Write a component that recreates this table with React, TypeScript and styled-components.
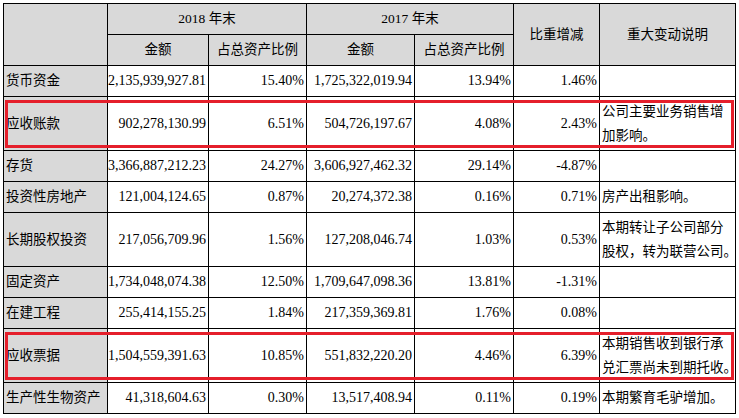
import styled, { createGlobalStyle } from "styled-components";

const GlobalStyle = createGlobalStyle`
  html, body {
    margin: 0;
    padding: 0;
    background: #ffffff;
  }
  body {
    font-family: "Liberation Serif", "Noto Sans CJK SC", serif;
    color: #000;
  }
`;

const Page = styled.div`
  padding: 3px 0 0 3px;
`;

const Table = styled.table`
  border-collapse: collapse;
  table-layout: fixed;
  width: 732px;
  font-size: 13.5px;
  line-height: 24px;
`;

const HeadCell = styled.th`
  background: #d9d9d9;
  border: 1.5px solid #000;
  font-weight: normal;
  text-align: center;
  vertical-align: middle;
  padding: 0;
  height: 30px;
`;

const Row = styled.tr<{ $tall?: boolean }>`
  position: relative;
  height: ${(p) => (p.$tall ? "54px" : "31px")};
`;

const NameCell = styled.td`
  background: #d9d9d9;
  border: 1.5px solid #000;
  padding: 0 0 0 2px;
  white-space: nowrap;
  vertical-align: middle;
`;

const NumCell = styled.td`
  border: 1.5px solid #000;
  text-align: right;
  padding: 0 2px 0 0;
  font-size: 14px;
  white-space: nowrap;
  vertical-align: middle;
`;

const NoteCell = styled.td`
  border: 1.5px solid #000;
  padding: 0 0 0 2px;
  white-space: nowrap;
  vertical-align: middle;
  overflow: visible;
`;

const Highlight = styled.div`
  position: absolute;
  top: 3px;
  bottom: 3px;
  left: 1px;
  right: 2px;
  border: 3px solid #e51f2b;
  pointer-events: none;
`;

type Item = {
  name: string;
  a18: string;
  p18: string;
  a17: string;
  p17: string;
  diff: string;
  note?: string[];
  boxed?: boolean;
};

const rows: Item[] = [
  { name: "货币资金", a18: "2,135,939,927.81", p18: "15.40%", a17: "1,725,322,019.94", p17: "13.94%", diff: "1.46%" },
  {
    name: "应收账款", a18: "902,278,130.99", p18: "6.51%", a17: "504,726,197.67", p17: "4.08%", diff: "2.43%",
    note: ["公司主要业务销售增", "加影响。"], boxed: true,
  },
  { name: "存货", a18: "3,366,887,212.23", p18: "24.27%", a17: "3,606,927,462.32", p17: "29.14%", diff: "-4.87%" },
  { name: "投资性房地产", a18: "121,004,124.65", p18: "0.87%", a17: "20,274,372.38", p17: "0.16%", diff: "0.71%", note: ["房产出租影响。"] },
  {
    name: "长期股权投资", a18: "217,056,709.96", p18: "1.56%", a17: "127,208,046.74", p17: "1.03%", diff: "0.53%",
    note: ["本期转让子公司部分", "股权，转为联营公司。"],
  },
  { name: "固定资产", a18: "1,734,048,074.38", p18: "12.50%", a17: "1,709,647,098.36", p17: "13.81%", diff: "-1.31%" },
  { name: "在建工程", a18: "255,414,155.25", p18: "1.84%", a17: "217,359,369.81", p17: "1.76%", diff: "0.08%" },
  {
    name: "应收票据", a18: "1,504,559,391.63", p18: "10.85%", a17: "551,832,220.20", p17: "4.46%", diff: "6.39%",
    note: ["本期销售收到银行承", "兑汇票尚未到期托收。"], boxed: true,
  },
  { name: "生产性生物资产", a18: "41,318,604.63", p18: "0.30%", a17: "13,517,408.94", p17: "0.11%", diff: "0.19%", note: ["本期繁育毛驴增加。"] },
];

export default function App() {
  return (
    <Page>
      <GlobalStyle />
      <Table>
        <colgroup>
          <col style={{ width: 104 }} />
          <col style={{ width: 101 }} />
          <col style={{ width: 98 }} />
          <col style={{ width: 108 }} />
          <col style={{ width: 99 }} />
          <col style={{ width: 86 }} />
          <col style={{ width: 136 }} />
        </colgroup>
        <thead>
          <tr>
            <HeadCell rowSpan={2}></HeadCell>
            <HeadCell colSpan={2}>2018 年末</HeadCell>
            <HeadCell colSpan={2}>2017 年末</HeadCell>
            <HeadCell rowSpan={2}>比重增减</HeadCell>
            <HeadCell rowSpan={2}>重大变动说明</HeadCell>
          </tr>
          <tr>
            <HeadCell>金额</HeadCell>
            <HeadCell>占总资产比例</HeadCell>
            <HeadCell>金额</HeadCell>
            <HeadCell>占总资产比例</HeadCell>
          </tr>
        </thead>
        <tbody>
          {rows.map((r) => (
            <Row key={r.name} $tall={!!r.note && r.note.length > 1}>
              <NameCell>
                {r.name}
                {r.boxed && <Highlight />}
              </NameCell>
              <NumCell>{r.a18}</NumCell>
              <NumCell>{r.p18}</NumCell>
              <NumCell>{r.a17}</NumCell>
              <NumCell>{r.p17}</NumCell>
              <NumCell>{r.diff}</NumCell>
              <NoteCell>
                {r.note?.map((line, i) => (
                  <span key={i}>
                    {i > 0 && <br />}
                    {line}
                  </span>
                ))}
              </NoteCell>
            </Row>
          ))}
        </tbody>
      </Table>
    </Page>
  );
}
